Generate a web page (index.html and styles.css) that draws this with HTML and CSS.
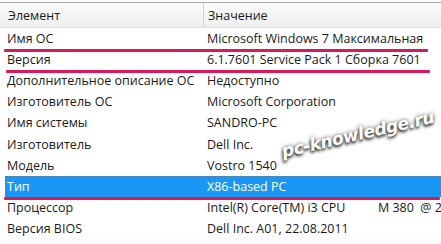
FILE: index.html
```html
<!DOCTYPE html>
<html lang="ru">
<head>
<meta charset="utf-8">
<title>Сведения о системе</title>
<link rel="stylesheet" href="styles.css">
</head>
<body>
<div class="sysinfo">
  <div class="list">
    <div class="head">
      <div class="hcell">Элемент</div>
      <div class="hcell hcell-val">Значение</div>
    </div>
    <div class="row"><span class="key">Имя ОС</span><span class="val">Microsoft Windows 7 Максимальная</span></div>
    <div class="row"><span class="key">Версия</span><span class="val">6.1.7601 Service Pack 1 Сборка 7601</span></div>
    <div class="row"><span class="key">Дополнительное описание ОС</span><span class="val">Недоступно</span></div>
    <div class="row"><span class="key">Изготовитель ОС</span><span class="val">Microsoft Corporation</span></div>
    <div class="row"><span class="key">Имя системы</span><span class="val">SANDRO-PC</span></div>
    <div class="row"><span class="key">Изготовитель</span><span class="val">Dell Inc.</span></div>
    <div class="row"><span class="key">Модель</span><span class="val">Vostro 1540</span></div>
    <div class="row selected"><span class="key">Тип</span><span class="val">X86-based PC</span></div>
    <div class="row"><span class="key">Процессор</span><span class="val cpu">Intel(R) Core(TM) i3 CPU          M 380  @ 2.53GHz</span></div>
    <div class="row"><span class="key">Версия BIOS</span><span class="val">Dell Inc. A01, 22.08.2011</span></div>
  </div>

  <!-- hand-drawn underlines marking the important rows -->
  <span class="mark mark-os"></span>
  <span class="mark mark-ver"></span>
  <span class="mark mark-type"></span>

  <span class="watermark">pc-knowledge.ru</span>
</div>
</body>
</html>
```

FILE: styles.css
```css
html, body {
  margin: 0;
  padding: 0;
  background: #ffffff;
}

.sysinfo {
  position: relative;
  width: 441px;
  height: 244px;
  overflow: hidden;
  font-family: "Open Sans", "Noto Sans", sans-serif;
  font-size: 12.5px;
  color: #1a1a1a;
  padding-top: 2px;
  box-sizing: border-box;
  background: #fbfbfb;
}

.list {
  border-top: 1px solid #a9a9a9;
  background: #ffffff;
}

.head {
  display: grid;
  grid-template-columns: 203px 1fr;
  height: 24px;
  background: linear-gradient(#fafafa, #efefef);
  border-bottom: 1px solid #e2e2e2;
}

.hcell {
  display: flex;
  align-items: center;
  padding-left: 8px;
}

.hcell-val {
  border-left: 1px solid #d0d0d0;
  padding-left: 4px;
}

.row {
  display: grid;
  grid-template-columns: 202px 1fr;
  height: 21.1px;
  align-items: center;
  margin-left: 5px;
}

.key {
  padding-left: 2px;
  white-space: nowrap;
}

.val {
  white-space: pre;
  overflow: hidden;
}

.selected {
  background: #1a97f5;
  color: #ffffff;
  box-shadow: inset 0 1px 0 #4d86b8;
}

.mark {
  position: absolute;
  height: 3px;
  background: #dc1859;
  border-radius: 1px;
}

.mark-os   { top: 49px;  left: 4px; width: 424px; }
.mark-ver  { top: 70px;  left: 6px; width: 424px; }
.mark-type { top: 197px; left: 4px; width: 436px; }

.watermark {
  position: absolute;
  left: 280px;
  top: 124px;
  font-family: "DejaVu Sans", sans-serif;
  font-weight: bold;
  font-style: italic;
  font-size: 17px;
  letter-spacing: -0.3px;
  color: #ffffff;
  transform: rotate(-13deg);
  transform-origin: center;
  text-shadow: -1px 2px 3px #333333, 0 0 4px #555555;
  white-space: nowrap;
}
```
